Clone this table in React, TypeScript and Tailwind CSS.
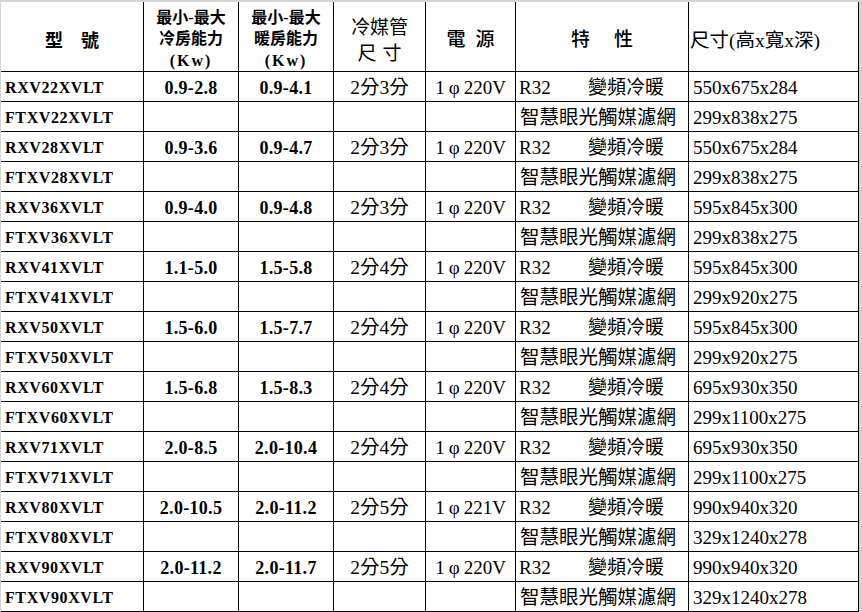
import React from "react";

type Unit = {
  model: string;
  cool: string;
  heat: string;
  pipe: string;
  volt: string;
  outdoor: string;
  indoor: string;
};

const units: Unit[] = [
  { model: "22", cool: "0.9-2.8", heat: "0.9-4.1", pipe: "2分3分", volt: "220V", outdoor: "550x675x284", indoor: "299x838x275" },
  { model: "28", cool: "0.9-3.6", heat: "0.9-4.7", pipe: "2分3分", volt: "220V", outdoor: "550x675x284", indoor: "299x838x275" },
  { model: "36", cool: "0.9-4.0", heat: "0.9-4.8", pipe: "2分3分", volt: "220V", outdoor: "595x845x300", indoor: "299x838x275" },
  { model: "41", cool: "1.1-5.0", heat: "1.5-5.8", pipe: "2分4分", volt: "220V", outdoor: "595x845x300", indoor: "299x920x275" },
  { model: "50", cool: "1.5-6.0", heat: "1.5-7.7", pipe: "2分4分", volt: "220V", outdoor: "595x845x300", indoor: "299x920x275" },
  { model: "60", cool: "1.5-6.8", heat: "1.5-8.3", pipe: "2分4分", volt: "220V", outdoor: "695x930x350", indoor: "299x1100x275" },
  { model: "71", cool: "2.0-8.5", heat: "2.0-10.4", pipe: "2分4分", volt: "220V", outdoor: "695x930x350", indoor: "299x1100x275" },
  { model: "80", cool: "2.0-10.5", heat: "2.0-11.2", pipe: "2分5分", volt: "221V", outdoor: "990x940x320", indoor: "329x1240x278" },
  { model: "90", cool: "2.0-11.2", heat: "2.0-11.7", pipe: "2分5分", volt: "220V", outdoor: "990x940x320", indoor: "329x1240x278" },
];

const cell = "border-r border-b border-black flex items-center h-[30px] pt-[3px]";
const model = "font-bold text-[16px] tracking-[0.6px] pl-[4px]";
const num = "justify-center font-bold text-[18px] tracking-[0.3px]";

function Empty() {
  return <div className={cell} />;
}

export default function App() {
  return (
    <div className="w-[862px] h-[612px] bg-[#d4d4d4] pt-[2px] pl-[1px] overflow-hidden">
      <div className="w-[858px] bg-white text-black font-['Liberation_Serif','Noto_Sans_CJK_TC',serif] grid grid-cols-[143px_95px_95px_92px_90px_173px_170px]">
        {/* header */}
        <div className="border-r border-b border-black h-[70px] flex items-center justify-center pt-[10px] font-bold text-[18px] gap-[18px]">
          <span>型</span>
          <span>號</span>
        </div>
        <div className="border-r border-b border-black h-[70px] flex flex-col items-center justify-center pt-[5px] font-bold text-[16px] leading-[21.5px]">
          <span>最小-最大</span>
          <span>冷房能力</span>
          <span className="tracking-[2px]">(Kw)</span>
        </div>
        <div className="border-r border-b border-black h-[70px] flex flex-col items-center justify-center pt-[5px] font-bold text-[16px] leading-[21.5px]">
          <span>最小-最大</span>
          <span>暖房能力</span>
          <span className="tracking-[2px]">(Kw)</span>
        </div>
        <div className="border-r border-b border-black h-[70px] flex flex-col items-center justify-center pt-[8px] text-[19px] leading-[26px]">
          <span>冷媒管</span>
          <span className="tracking-[6px] pl-[6px]">尺寸</span>
        </div>
        <div className="border-r border-b border-black h-[70px] flex items-center justify-center pt-[8px] text-[19px] font-medium gap-[10px]">
          <span>電</span>
          <span>源</span>
        </div>
        <div className="border-r border-b border-black h-[70px] flex items-center justify-center pt-[8px] text-[19px] font-medium gap-[24px]">
          <span>特</span>
          <span>性</span>
        </div>
        <div className="border-r border-b border-black h-[70px] flex items-center pt-[8px] pl-[1px] text-[19.5px] whitespace-nowrap">
          尺寸(高x寬x深)
        </div>

        {units.map((u) => (
          <React.Fragment key={u.model}>
            <div className={`${cell} ${model}`}>RXV{u.model}XVLT</div>
            <div className={`${cell} ${num}`}>{u.cool}</div>
            <div className={`${cell} ${num}`}>{u.heat}</div>
            <div className={`${cell} justify-center text-[19.5px]`}>{u.pipe}</div>
            <div className={`${cell} justify-center text-[19px] whitespace-nowrap`}>
              1<span className="inline-block w-[19px] text-center">φ</span>
              {u.volt}
            </div>
            <div className={`${cell} pl-[3px] text-[19px] whitespace-nowrap`}>
              <span className="inline-block w-[69px]">R32</span>
              <span>變頻冷暖</span>
            </div>
            <div className={`${cell} pl-[4px] text-[19px]`}>{u.outdoor}</div>

            <div className={`${cell} ${model}`}>FTXV{u.model}XVLT</div>
            <Empty />
            <Empty />
            <Empty />
            <Empty />
            <div className={`${cell} pl-[4px] text-[19.5px] whitespace-nowrap`}>智慧眼光觸媒濾網</div>
            <div className={`${cell} pl-[4px] text-[19px]`}>{u.indoor}</div>
          </React.Fragment>
        ))}
      </div>
    </div>
  );
}
